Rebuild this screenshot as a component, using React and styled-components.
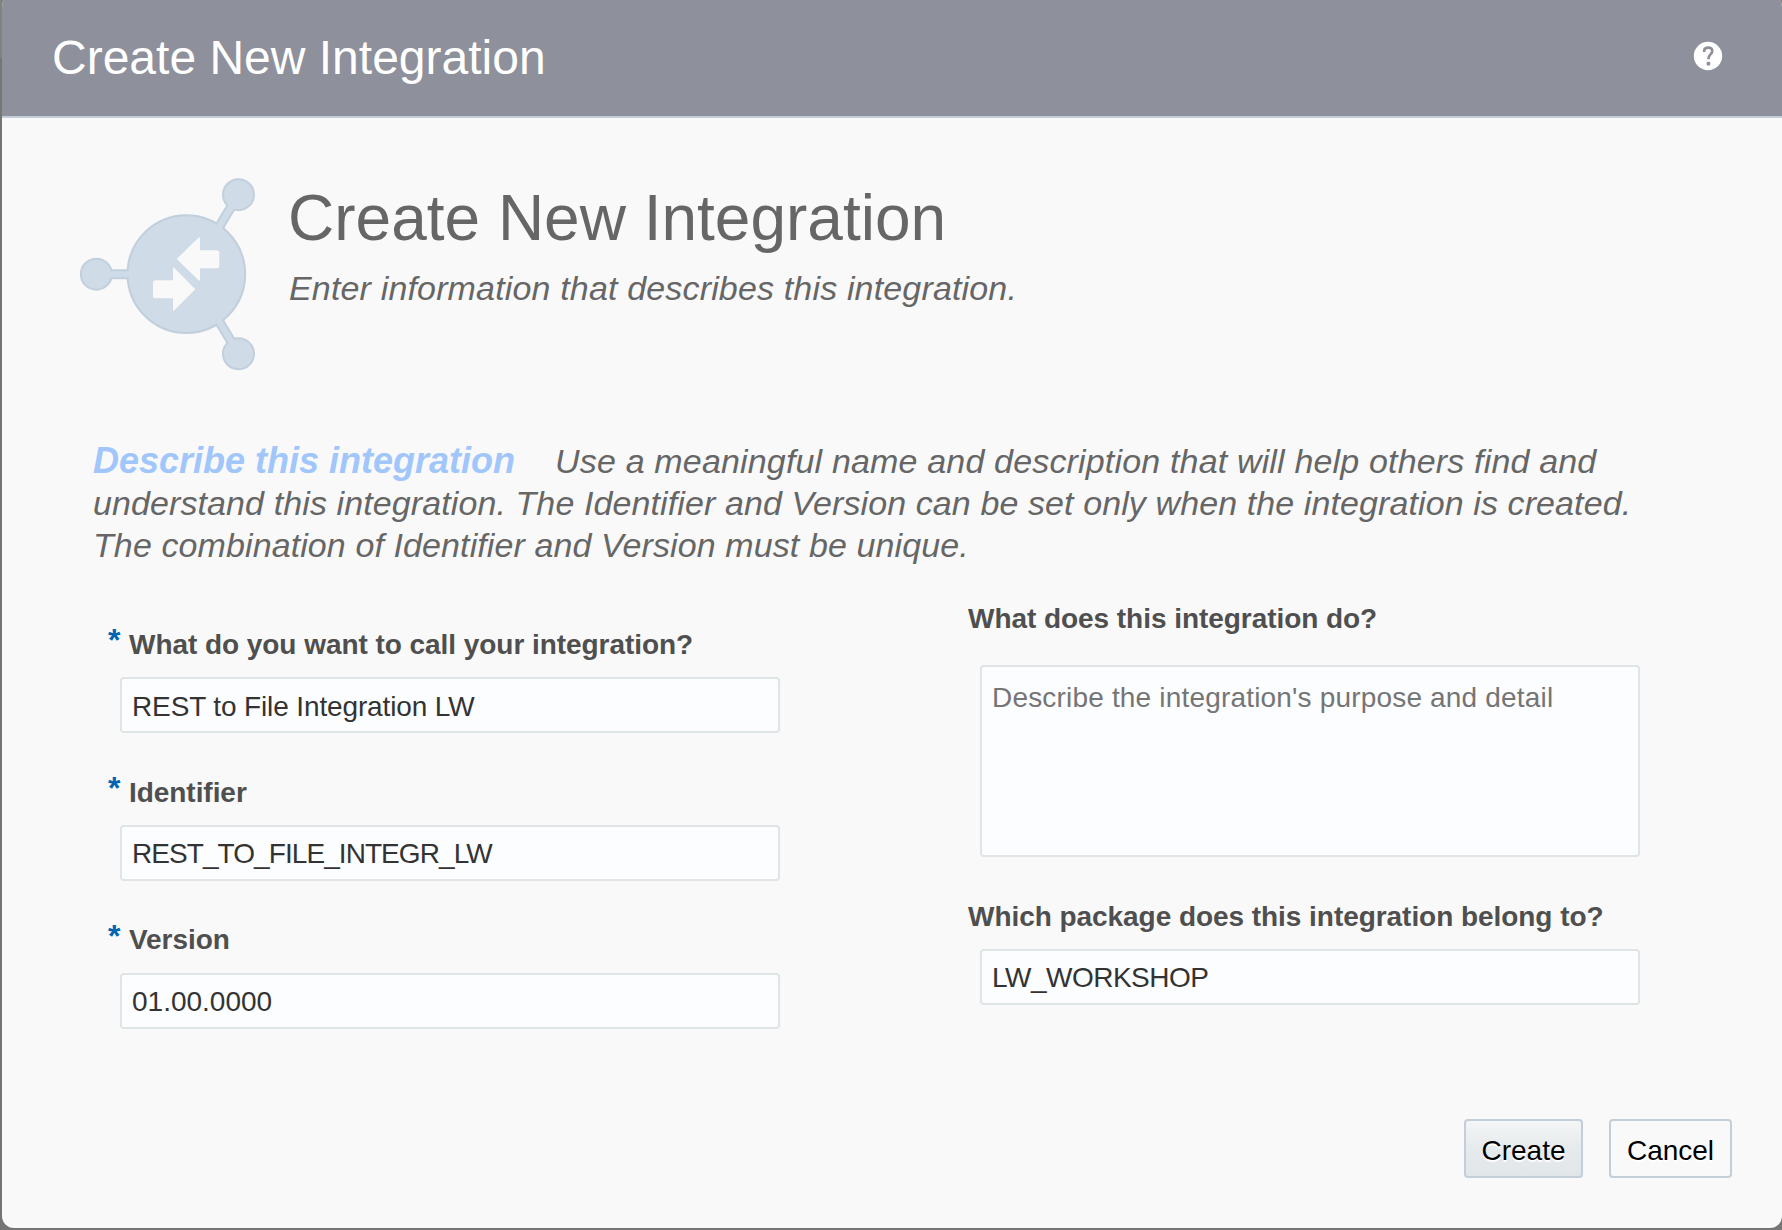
import React from "react";
import styled, { createGlobalStyle } from "styled-components";

const GlobalStyle = createGlobalStyle`
  * { box-sizing: border-box; }
  body {
    margin: 0;
    background: #757575;
    font-family: "Liberation Sans", Arial, Helvetica, sans-serif;
  }
`;

const Backdrop = styled.div`
  width: 1782px;
  height: 1230px;
  padding: 0 0 2px 2px;
  overflow: hidden;
  background: linear-gradient(#82827e 58px, #757575 58px);
`;

const Dialog = styled.section`
  display: flex;
  flex-direction: column;
  height: 1233px;
  margin-top: -5px;
  border-radius: 12px;
  overflow: hidden;
  background: #f9f9f9;
`;

const Header = styled.header`
  display: flex;
  flex: none;
  align-items: center;
  justify-content: space-between;
  height: 123px;
  padding: 5px 59px 0 50px;
  background: #8e909b;
  border-bottom: 2px solid #c4ced8;
`;

const HeaderTitle = styled.h1`
  margin: 0;
  font-size: 48px;
  font-weight: 400;
  line-height: 54px;
  color: #fff;
`;

const HelpButton = styled.button`
  display: flex;
  padding: 0;
  margin-bottom: 4px;
  border: 0;
  background: none;
`;

const Hero = styled.div`
  display: flex;
  flex: none;
  gap: 32px;
  height: 252px;
  padding: 60px 0 0 78px;
`;

const HeroText = styled.div`
  padding-top: 4px;
  color: #666;
`;

const HeroTitle = styled.h2`
  margin: 0;
  font-size: 64px;
  font-weight: 400;
  line-height: 72px;
`;

const HeroSubtitle = styled.p`
  margin: 14px 0 0 1px;
  font-size: 34px;
  font-style: italic;
  letter-spacing: 0.16px;
  line-height: 40px;
  white-space: nowrap;
`;

const Intro = styled.p`
  flex: none;
  height: 126px;
  margin: 70px 0 37px 91px;
  font-size: 34px;
  font-style: italic;
  letter-spacing: 0.1px;
  line-height: 42px;
  color: #666;
  white-space: nowrap;
`;

const IntroLead = styled.strong`
  margin-right: 40px;
  font-size: 36px;
  letter-spacing: 0;
  line-height: 36px;
  color: #a0c6fb;
`;

const IntroOpening = styled.span`
  letter-spacing: 0.165px;
`;

const Form = styled.form`
  display: grid;
  flex: none;
  grid-template-columns: 672px 672px;
  column-gap: 188px;
  margin-left: 106px;
`;

const Column = styled.div`
  display: flex;
  flex-direction: column;
  gap: 44px;
  padding-top: ${(p) => p.$offset || 0}px;
`;

const Field = styled.div`
  display: flex;
  flex-direction: column;
  gap: ${(p) => p.$gap || 16}px;
`;

const Label = styled.label`
  display: flex;
  height: 32px;
  font-size: 28px;
  font-weight: 700;
  letter-spacing: -0.05px;
  line-height: ${(p) => p.$line || 32}px;
  color: #4f4f4f;
  white-space: nowrap;
`;

const Required = styled.span`
  width: 21px;
  font-size: 32px;
  line-height: 22px;
  color: #0464b0;
`;

const TextInput = styled.input`
  width: 660px;
  height: 56px;
  margin-left: 12px;
  padding: ${(p) => p.$top || 2}px 8px 0 10px;
  border: 2px solid #dfe4e7;
  border-radius: 4px;
  background: #fcfdff;
  font: 28px "Liberation Sans", Arial, Helvetica, sans-serif;
  letter-spacing: ${(p) => p.$tracking || 0}px;
  color: #333;
`;

const TextArea = styled.textarea`
  width: 660px;
  height: 192px;
  margin-left: 12px;
  padding: 15px 8px 14px 10px;
  border: 2px solid #dfe4e7;
  border-radius: 4px;
  background: #fcfdff;
  font: 28px/32px "Liberation Sans", Arial, Helvetica, sans-serif;
  letter-spacing: 0.18px;
  resize: none;
  &::placeholder { color: #757575; }
`;

const Footer = styled.footer`
  display: flex;
  justify-content: flex-end;
  gap: 26px;
  margin-top: auto;
  padding: 0 50px 50px 0;
`;

const Button = styled.button`
  width: ${(p) => p.$width}px;
  height: 59px;
  padding: 5px 0 0;
  border: 2px solid #c3ced8;
  border-radius: 4px;
  background: ${(p) => (p.$primary ? "linear-gradient(#f3f5f6, #e8ebed 45%, #e1e6e9)" : "#f9f9f9")};
  font: 28px "Liberation Sans", Arial, Helvetica, sans-serif;
  color: #000;
  text-shadow: 0 2px 0 #fff;
`;

function HelpIcon() {
  return (
    <svg width="30" height="30" viewBox="0 0 30 30">
      <circle cx="15" cy="15" r="14.2" fill="#fff" />
      <path d="M11.2 11V9.8Q11.2 6.6 15.3 6.6T19.2 10.2C19.2 13.2 15.4 13.4 15.4 18.2" fill="none" stroke="#8e909b" strokeWidth="2.7" />
      <rect x="13.6" y="20.8" width="3.6" height="3.6" rx="1" fill="#8e909b" />
    </svg>
  );
}

function IntegrationIcon() {
  return (
    <svg width="176" height="193" viewBox="60 53 528 579">
      <g fill="#c2cfdc" stroke="#c2cfdc">
        <path d="M109 341.5H260M535.5 103L440 262M535.5 580L440 421" fill="none" strokeWidth="30" />
        <g strokeWidth="9">
          <circle cx="379" cy="341.5" r="175" />
          <circle cx="109" cy="341.5" r="45" />
          <circle cx="535.5" cy="103" r="45" />
          <circle cx="535.5" cy="580.5" r="45" />
        </g>
      </g>
      <g fill="#cfdbe6">
        <path d="M109 341.5H260M535.5 103L440 262M535.5 580L440 421" fill="none" stroke="#cfdbe6" strokeWidth="18" />
        <circle cx="379" cy="341.5" r="173.5" />
        <circle cx="109" cy="341.5" r="43.5" />
        <circle cx="535.5" cy="103" r="43.5" />
        <circle cx="535.5" cy="580.5" r="43.5" />
      </g>
      <g fill="#f9f9f9">
        <path d="M350 296L415 232Q420 229 420 235V270H471Q478 270 478 277V317Q478 324 471 324H420V358Q420 363 415 359Z" />
        <path d="M406 387L343 450Q339 453 339 448V414H287Q279 414 279 407V367Q279 360 287 360H339V325Q339 319 343 323Z" />
      </g>
    </svg>
  );
}

const requiredFields = [
  { id: "name", label: "What do you want to call your integration?", value: "REST to File Integration LW", top: 4, tracking: -0.13 },
  { id: "identifier", label: "Identifier", value: "REST_TO_FILE_INTEGR_LW", tracking: -0.93 },
  { id: "version", label: "Version", value: "01.00.0000", line: 30 },
];

export default function App() {
  return (
    <>
      <GlobalStyle />
      <Backdrop>
        <Dialog>
          <Header>
            <HeaderTitle>Create New Integration</HeaderTitle>
            <HelpButton type="button" aria-label="Help"><HelpIcon /></HelpButton>
          </Header>
          <Hero>
            <IntegrationIcon />
            <HeroText>
              <HeroTitle>Create New Integration</HeroTitle>
              <HeroSubtitle>Enter information that describes this integration.</HeroSubtitle>
            </HeroText>
          </Hero>
          <Intro>
            <IntroLead>Describe this integration</IntroLead>
            <IntroOpening>Use a meaningful name and description that will help others find and</IntroOpening>
            <br />
            understand this integration. The Identifier and Version can be set only when the integration is created.
            <br />
            The combination of Identifier and Version must be unique.
          </Intro>
          <Form>
            <Column $offset={26}>
              {requiredFields.map((f) => (
                <Field key={f.id}>
                  <Label htmlFor={f.id} $line={f.line}><Required>*</Required>{f.label}</Label>
                  <TextInput id={f.id} defaultValue={f.value} $top={f.top} $tracking={f.tracking} />
                </Field>
              ))}
            </Column>
            <Column>
              <Field $gap={30}>
                <Label htmlFor="description">What does this integration do?</Label>
                <TextArea id="description" placeholder="Describe the integration's purpose and detail" />
              </Field>
              <Field>
                <Label htmlFor="package">Which package does this integration belong to?</Label>
                <TextInput id="package" defaultValue="LW_WORKSHOP" $tracking={-0.5} />
              </Field>
            </Column>
          </Form>
          <Footer>
            <Button type="button" $primary $width={119}>Create</Button>
            <Button type="button" $width={123}>Cancel</Button>
          </Footer>
        </Dialog>
      </Backdrop>
    </>
  );
}
